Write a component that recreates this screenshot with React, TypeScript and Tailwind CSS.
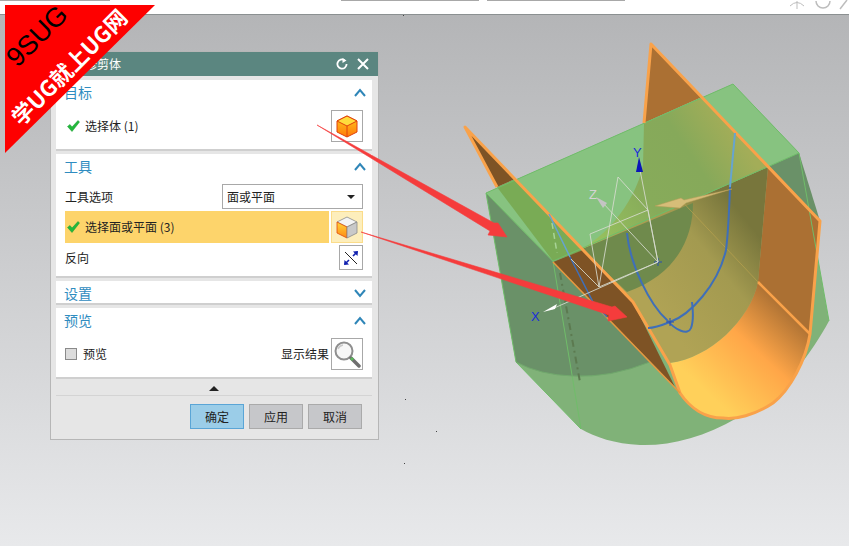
const CJK = "font-['Noto_Sans_CJK_SC','Liberation_Sans',sans-serif]"

function SectionHead({ title, open = true }: { title: string; open?: boolean }) {
  return (
    <div className="flex h-6 items-center justify-between pl-2 pr-[6px]">
      <span className="text-[14px] leading-none text-[#2f8cc0]">{title}</span>
      <svg width="12" height="9" viewBox="0 0 12 9">
        <path d={open ? 'M1 8 L6 2 L11 8' : 'M1 1 L6 7 L11 1'} fill="none" stroke="#2f86b8" strokeWidth="2" />
      </svg>
    </div>
  )
}

function Check() {
  return (
    <svg width="13" height="12" viewBox="0 0 13 12" className="shrink-0">
      <path d="M0.5 6.5 L3 4.5 L5 7 L11 0.5 L12.5 2 L5 11.5 Z" fill="#22b83c" stroke="#149a2c" strokeWidth="0.5" />
    </svg>
  )
}

function OrangeCube() {
  return (
    <svg width="24" height="24" viewBox="0 0 24 24">
      <defs>
        <linearGradient id="cubeA" x1="0" y1="0" x2="0" y2="1">
          <stop offset="0" stopColor="#ffc81e" />
          <stop offset="1" stopColor="#ff7a0a" />
        </linearGradient>
      </defs>
      <path d="M12 2 L22 7 L22 18 L12 23 L2 18 L2 7 Z" fill="url(#cubeA)" stroke="#e0400c" strokeWidth="1" />
      <path d="M12 2 L22 7 L12 12 L2 7 Z" fill="#ffdc3c" stroke="#e0400c" strokeWidth="1" />
      <path d="M12 12 L12 23" fill="none" stroke="#e0400c" strokeWidth="1" />
    </svg>
  )
}

function WhiteCube() {
  return (
    <svg width="24" height="24" viewBox="0 0 24 24">
      <defs>
        <linearGradient id="cubeB" x1="0" y1="0" x2="0" y2="1">
          <stop offset="0" stopColor="#ffd43a" />
          <stop offset="1" stopColor="#ff8a14" />
        </linearGradient>
      </defs>
      <path d="M12 2 L22 7 L12 12 L2 7 Z" fill="#f4f4f4" stroke="#8a8a8a" strokeWidth="0.8" />
      <path d="M2 7 L12 12 L12 23 L2 18 Z" fill="url(#cubeB)" stroke="#e0480c" strokeWidth="0.8" />
      <path d="M22 7 L12 12 L12 23 L22 18 Z" fill="#c9c9c9" stroke="#8a8a8a" strokeWidth="0.8" />
    </svg>
  )
}

function ReverseIcon() {
  return (
    <svg width="18" height="18" viewBox="0 0 18 18">
      <path d="M3 3 L15 15" stroke="#222" strokeWidth="1" />
      <path d="M3 15 L7 11 M11 7 L15 3" stroke="#1222b0" strokeWidth="1.6" />
      <path d="M16 2 L15.5 7 L11 2.5 Z M2 16 L2.5 11 L7 15.5 Z" fill="#1222b0" />
    </svg>
  )
}

function Magnifier() {
  return (
    <svg width="28" height="28" viewBox="0 0 28 28">
      <circle cx="11" cy="11" r="8.5" fill="#f7f7f7" stroke="#8f8f8f" strokeWidth="2" />
      <path d="M5 9 A6.5 6.5 0 0 1 10 5" fill="none" stroke="#c9c9c9" strokeWidth="1.5" />
      <path d="M18 18 L26 26" stroke="#6f6f6f" strokeWidth="3.5" strokeLinecap="round" />
      <path d="M18 18 L20 20" stroke="#5cb85c" strokeWidth="3" />
    </svg>
  )
}

function IconButton({ children, className = 'border-[#a8a8a8] bg-white' }: { children: React.ReactNode; className?: string }) {
  return (
    <div className={`flex h-8 w-8 shrink-0 items-center justify-center border ${className}`}>
      {children}
    </div>
  )
}

function Dialog() {
  return (
    <div className={`absolute left-[50px] top-[51px] flex h-[389px] w-[329px] flex-col border border-[#b6b6b6] bg-[#e6e6e6] text-[12px] text-[#222] ${CJK}`}>
      <div className="flex h-6 shrink-0 items-center justify-between bg-[#5b8680] pl-[34px] pr-[9px] text-white">
        <span className="text-[12px]">修剪体</span>
        <div className="flex items-center gap-[9px]">
          <svg width="12" height="12" viewBox="0 0 12 12">
            <path d="M8.5 2.2 A4.6 4.6 0 1 0 10.6 6" fill="none" stroke="#fff" strokeWidth="1.8" />
            <path d="M6.5 0 L10.5 2.6 L6.5 5 Z" fill="#fff" />
          </svg>
          <svg width="12" height="12" viewBox="0 0 12 12">
            <path d="M1 1 L11 11 M11 1 L1 11" fill="none" stroke="#fff" strokeWidth="2" />
          </svg>
        </div>
      </div>

      <div className="ml-[5px] mr-[6px] mt-[4px] flex flex-col gap-[3px]">
        <section className="h-[71px] border-b-2 border-[#cfcfcf] bg-white">
          <SectionHead title="目标" />
          <div className="mt-[6px] flex items-center justify-between pl-[11px] pr-[9px]">
            <div className="flex items-center gap-[5px]">
              <Check />
              <span>选择体 (1)</span>
            </div>
            <IconButton><OrangeCube /></IconButton>
          </div>
        </section>

        <section className="h-[124px] border-b-2 border-[#cfcfcf] bg-white">
          <SectionHead title="工具" />
          <div className="mt-[6px] flex h-[25px] items-center justify-between px-[9px]">
            <span>工具选项</span>
            <div className="flex h-[25px] w-[141px] items-center justify-between border border-[#a8a8a8] pl-[4px] pr-[7px]">
              <span>面或平面</span>
              <span className="h-0 w-0 border-x-[4px] border-t-[4px] border-x-transparent border-t-[#222]" />
            </div>
          </div>
          <div className="mt-[2px] flex h-8 items-stretch gap-[2px] px-[9px]">
            <div className="flex flex-1 items-center gap-[5px] bg-[#fdd46b] pl-[2px]">
              <Check />
              <span>选择面或平面 (3)</span>
            </div>
            <IconButton className="border-[#fbdc8a] bg-[#fdeebc]"><WhiteCube /></IconButton>
          </div>
          <div className="mt-[2px] flex h-[25px] items-center justify-between px-[9px]">
            <span>反向</span>
            <div className="flex h-[25px] w-[24px] items-center justify-center border border-[#a8a8a8]">
              <ReverseIcon />
            </div>
          </div>
        </section>

        <section className="h-6 border-b-2 border-[#cfcfcf] bg-white">
          <SectionHead title="设置" open={false} />
        </section>

        <section className="h-[71px] border-b-2 border-[#cfcfcf] bg-white">
          <SectionHead title="预览" />
          <div className="mt-[6px] flex items-center justify-between px-[9px]">
            <div className="flex items-center gap-[6px]">
              <span className="h-3 w-3 border border-[#8a8a8a] bg-[#dcdcdc]" />
              <span>预览</span>
            </div>
            <div className="flex items-center gap-[2px]">
              <span>显示结果</span>
              <IconButton><Magnifier /></IconButton>
            </div>
          </div>
        </section>
      </div>

      <div className="ml-[5px] mr-[6px] flex h-[17px] shrink-0 items-center justify-center border-b border-[#d4d4d4] pt-[2px]">
        <span className="h-0 w-0 border-x-[5px] border-b-[5px] border-x-transparent border-b-[#222]" />
      </div>

      <div className="mr-[16px] mt-[8px] flex justify-end gap-[5px]">
        <div className="flex h-[25px] w-[54px] items-center justify-center border border-[#5aa5d6] bg-[#9bcde8]">确定</div>
        <div className="flex h-[25px] w-[54px] items-center justify-center border border-[#aaaaaa] bg-[#c6c7ca]">应用</div>
        <div className="flex h-[25px] w-[54px] items-center justify-center border border-[#aaaaaa] bg-[#c6c7ca]">取消</div>
      </div>
    </div>
  )
}

function Model() {
  return (
    <svg width="849" height="546" viewBox="0 0 849 546" className="pointer-events-none absolute left-0 top-0">
      <defs>
        <linearGradient id="olive" gradientUnits="userSpaceOnUse" x1="670" y1="330" x2="770" y2="250">
          <stop offset="0" stopColor="#b0a355" />
          <stop offset="0.6" stopColor="#a39a50" />
          <stop offset="1" stopColor="#78763c" />
        </linearGradient>
        <linearGradient id="lit" gradientUnits="userSpaceOnUse" x1="715" y1="400" x2="795" y2="315">
          <stop offset="0" stopColor="#ffd05a" />
          <stop offset="0.55" stopColor="#ffa648" />
          <stop offset="1" stopColor="#ab7033" />
        </linearGradient>
        <linearGradient id="topSheet" gradientUnits="userSpaceOnUse" x1="575" y1="250" x2="740" y2="140">
          <stop offset="0" stopColor="#9cc95f" />
          <stop offset="0.45" stopColor="#87ab5a" />
          <stop offset="0.75" stopColor="#86a95a" />
          <stop offset="1" stopColor="#a3ad58" />
        </linearGradient>
      </defs>

      {/* body */}
      <path d="M486 193 L733 84 L799 153 L829 321 C 805 365 770 405 737 418 C 705 437 670 446 640 445 C 615 444 595 437 581 429 L516 362 Z" fill="#80b278" />
      <path d="M486 193 L553 262 L650 362 Q 610 378 573 376 Q 540 375 516 362 Z" fill="#6a9168" />
      <path d="M799 153 L768 167 L820 221 Z" fill="#6a9168" />

      {/* inside of the cut */}
      <path d="M553 261 L768 167 L758 282 C 750 320 710 358 670 363 L633 302 L583 250 Z" fill="url(#olive)" />
      <path d="M553 261 L693 203 C 693 240 675 275 627 292 L583 250 Z" fill="#6f8a4c" />
      <path d="M670 363 C 710 358 750 320 758 282 L810 334 C 806 360 790 390 773 403 C 755 415 735 420 723 418 C 705 418 690 408 680 393 Z" fill="url(#lit)" />
      <path d="M768 167 L820 221 L810 334 L758 282 Z" fill="#ab7033" />
      <path d="M651 44 L702 97 L644 123 Z" fill="#ab7033" />
      <path d="M643 160 L758 282" fill="none" stroke="#b9a24f" strokeWidth="1" opacity="0.7" />

      {/* top face */}
      <path d="M486 193 L733 84 L799 153 L553 261 Z" fill="#87c380" />
      <path d="M644 123 L702 97 L768 167 L566 256 C 600 245 635 205 643 165 Z" fill="url(#topSheet)" />
      <path d="M497 187 L515 179 L583 250 L553 261 Z" fill="#79ab55" />

      {/* front sheet */}
      <path d="M465 127 L515 179 L497 187 Z" fill="#7e5325" />
      <path d="M553 262 L583 250 L633 302 L675 387 Z" fill="#7e5325" />

      {/* model edges */}
      <path d="M486 193 L733 84 L799 153 L553 261 Z M553 261 L581 429 M486 193 L516 362 L581 429 M799 153 L829 321" fill="none" stroke="#70bd6a" strokeWidth="1" />
      <path d="M516 362 Q 540 375 573 376 Q 610 378 650 362" fill="none" stroke="#70a86c" strokeWidth="1" />
      <path d="M560 273 L580 382" fill="none" stroke="#5c7a50" strokeWidth="2" strokeDasharray="7 4 2 4" />
      <path d="M552 223 L557 253" fill="none" stroke="#a8d496" strokeWidth="1.5" strokeDasharray="6 4" />

      {/* orange outline */}
      <path d="M644 123 L651 44 L820 221 L810 334 C 806 360 790 390 773 403 C 755 415 735 420 723 418 C 705 418 690 408 680 393 L670 365 L633 302 L465 127 L497 187" fill="none" stroke="#f9a24a" strokeWidth="3" strokeLinejoin="round" />
      <path d="M758 282 L810 334" fill="none" stroke="#f9a24a" strokeWidth="2.5" />
      <path d="M553 262 L680 393" fill="none" stroke="#e8983f" strokeWidth="1.5" />

      {/* blue curves */}
      <path d="M735 133 L730 187" fill="none" stroke="#66a4d0" strokeWidth="2" />
      <path d="M730 187 C 729 215 728 235 726 250 C 718 285 690 315 670 322 C 660 326 652 328 648 328" fill="none" stroke="#3f6fb8" strokeWidth="2" />
      <path d="M627 233 C 630 265 650 305 667 320 C 675 330 688 336 691 328 C 694 320 693 310 692 302" fill="none" stroke="#3f6fb8" strokeWidth="2" />
      <path d="M549 214 L570 257" fill="none" stroke="#66a4d0" strokeWidth="1.5" />
      <path d="M570 257 L593 302 L607 317" fill="none" stroke="#3f6fb8" strokeWidth="1.5" />
      <path d="M654 262 H662 M658 258 V266 M666 322 H674 M670 318 V326" stroke="#2a4fb0" strokeWidth="1" />

      {/* wcs */}
      <path d="M618 177 L648 210 L658 262 M618 177 L599 287 M590 234 L648 210 M590 234 L599 287 L658 262 M640 170 L658 262 M602 202 L658 262 M571 259 L599 287 M658 262 L552 309" fill="none" stroke="#d8dcd0" strokeWidth="0.85" />
      <path d="M639 157 L643 172 L636 172 Z" fill="#0a16b8" />
      <path d="M596 197 L607 203 L603 208 Z" fill="#c4c4c4" />
      <path d="M543 312 L557 304 L555 309 Z" fill="#ffffff" />
      <text x="633" y="157" fontSize="13" fontFamily="Liberation Sans" fill="#1a2fd8">Y</text>
      <text x="589" y="199" fontSize="13" fontFamily="Liberation Sans" fill="#d4d4d4">Z</text>
      <text x="531" y="321" fontSize="13" fontFamily="Liberation Sans" fill="#1a2fd8">X</text>

      {/* golden vector */}
      <path d="M655 206 L681 198 L684 200 L732 189 L686 203 L680 208 Z" fill="#d6bd78" stroke="#b89c58" strokeWidth="0.5" />

      {/* red arrows */}
      <path d="M317 125 L494 223 L498 223 L507 237 L488 235 L490 231 Z" fill="#f53c3c" stroke="#f53c3c" strokeWidth="0.6" />
      <path d="M361 232 L612 307 L615 306 L627 317 L608 321 L609 315 Z" fill="#f53c3c" stroke="#f53c3c" strokeWidth="0.6" />

      {/* specks */}
      <path d="M403 15 h1 v1 h-1 Z M405 399 h1 v1 h-1 Z M436 431 h1 v1 h-1 Z M404 463 h1 v1 h-1 Z" fill="#444" />
    </svg>
  )
}

function Corner() {
  return (
    <>
      <div className="absolute left-[5px] top-[5px] h-[148px] w-[150px] bg-[#fe0000] [clip-path:polygon(0_0,100%_0,0_100%)]" />
      <span className="absolute left-[-3px] top-[20px] w-[80px] -rotate-45 text-center font-['Liberation_Sans',sans-serif] text-[27px] leading-[32px] text-black">
        9SUG
      </span>
      <span className={`absolute left-[-17px] top-[50px] w-[170px] -rotate-45 whitespace-nowrap text-center text-[22px] font-bold leading-[32px] text-white ${CJK}`}>
        学UG就上UG网
      </span>
    </>
  )
}

export default function App() {
  return (
    <div className="relative h-[546px] w-[849px] overflow-hidden bg-white">
      {/* top ribbon, cut off by the screenshot */}
      <div className="relative h-[15px] border-b border-[#8b9091] bg-white">
        <div className="absolute left-0 top-0 h-px w-[110px] bg-[#a8a8a8]" />
        <div className="absolute left-[341px] top-0 h-px w-[138px] bg-[#a8a8a8]" />
        <div className="absolute left-[487px] top-0 h-px w-[138px] bg-[#a8a8a8]" />
        <svg width="60" height="10" viewBox="0 0 60 10" className="absolute left-[789px] top-0">
          <path d="M1 6 Q8 -1 15 6 M8 1 V9" fill="none" stroke="#bdbdbd" strokeWidth="1" />
          <path d="M27 1 A6.5 6.5 0 0 0 41 1" fill="none" stroke="#bdbdbd" strokeWidth="1.5" />
          <path d="M51 9 L58 0" fill="none" stroke="#bdbdbd" strokeWidth="1.5" />
        </svg>
      </div>
      <div className="h-[531px] bg-gradient-to-b from-[#b4b5b7] to-[#e8e9eb]" />
      <Dialog />
      <Model />
      <Corner />
    </div>
  )
}
